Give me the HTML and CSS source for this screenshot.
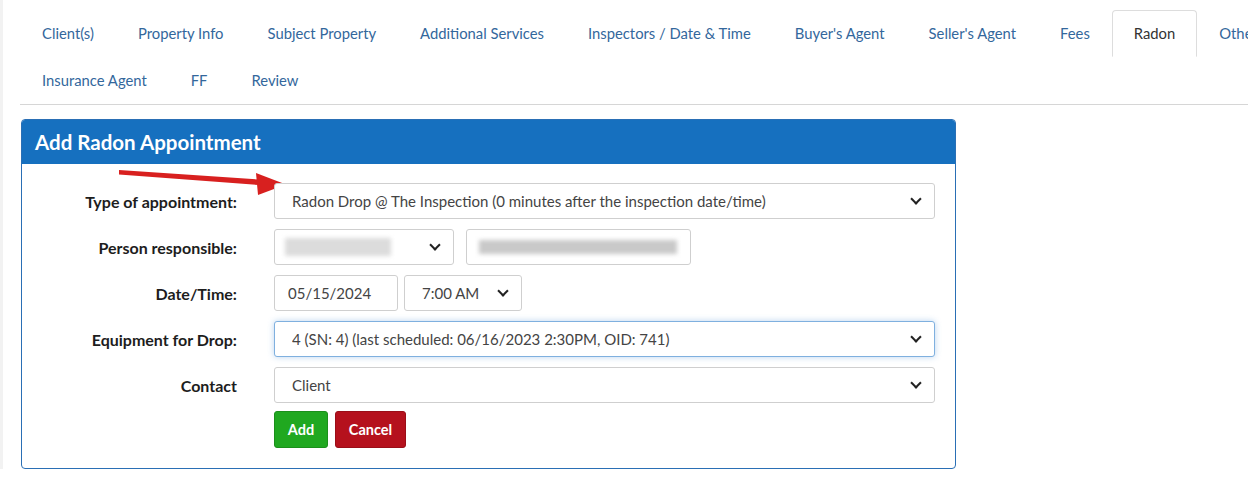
FILE: index.html
```html
<!DOCTYPE html>
<html lang="en">
<head>
    <meta charset="UTF-8">
    <meta name="viewport" content="width=device-width, initial-scale=1.0">
    <title>Add Radon Appointment</title>
    <link rel="stylesheet" href="styles.css">
</head>
<body>
    <div class="page">
        <ul class="tabs">
            <li><a href="#">Client(s)</a></li>
            <li><a href="#">Property Info</a></li>
            <li><a href="#">Subject Property</a></li>
            <li><a href="#">Additional Services</a></li>
            <li><a href="#">Inspectors / Date &amp; Time</a></li>
            <li><a href="#">Buyer's Agent</a></li>
            <li><a href="#">Seller's Agent</a></li>
            <li><a href="#">Fees</a></li>
            <li class="active"><a href="#">Radon</a></li>
            <li><a href="#">Other</a></li>
            <li><a href="#">Insurance Agent</a></li>
            <li><a href="#">FF</a></li>
            <li><a href="#">Review</a></li>
        </ul>

        <div class="panel">
            <div class="panel-heading">Add Radon Appointment</div>
            <div class="panel-body">
                <svg class="arrow" width="170" height="32" viewBox="0 0 170 32">
                    <path d="M1 4 L141 13.5 L141 19 L1 8.5 Z" fill="#d8201f"/>
                    <polygon points="138,7 140,29 168,18.5" fill="#d8201f"/>
                </svg>

                <div class="form-row">
                    <label>Type of appointment:</label>
                    <div class="controls">
                        <div class="select-wrap full">
                            <select><option>Radon Drop @ The Inspection (0 minutes after the inspection date/time)</option></select>
                        </div>
                    </div>
                </div>

                <div class="form-row">
                    <label>Person responsible:</label>
                    <div class="controls gap-lg">
                        <div class="select-wrap w-person">
                            <div class="fake-select"><span class="blur blur-name"></span></div>
                        </div>
                        <div class="fake-input w-email"><span class="blur blur-email"></span></div>
                    </div>
                </div>

                <div class="form-row">
                    <label>Date/Time:</label>
                    <div class="controls">
                        <input class="input w-date" type="text" value="05/15/2024">
                        <div class="select-wrap w-time">
                            <select><option>7:00 AM</option></select>
                        </div>
                    </div>
                </div>

                <div class="form-row">
                    <label>Equipment for Drop:</label>
                    <div class="controls">
                        <div class="select-wrap full focus">
                            <select><option>4 (SN: 4) (last scheduled: 06/16/2023 2:30PM, OID: 741)</option></select>
                        </div>
                    </div>
                </div>

                <div class="form-row">
                    <label>Contact</label>
                    <div class="controls">
                        <div class="select-wrap full">
                            <select><option>Client</option></select>
                        </div>
                    </div>
                </div>

                <div class="form-row buttons">
                    <span></span>
                    <div class="controls">
                        <button class="btn btn-add">Add</button>
                        <button class="btn btn-cancel">Cancel</button>
                    </div>
                </div>
            </div>
        </div>
    </div>
</body>
</html>
```

FILE: styles.css
```css
* {
    box-sizing: border-box;
    margin: 0;
    padding: 0;
}
body {
    font-family: Lato, "Open Sans", sans-serif;
    background-color: #fff;
    overflow: hidden;
    border-left: 3px solid #f2f2f2;
}
.page {
    padding-top: 10px;
    padding-left: 17px;
}

/* tabs */
.tabs {
    list-style: none;
    display: flex;
    flex-wrap: wrap;
    width: 1320px;
    border-bottom: 1px solid #d6d6d6;
}
.tabs li a {
    display: block;
    padding: 13px 21px;
    line-height: 19px;
    font-size: 14.8px;
    color: #33679c;
    text-decoration: none;
    border: 1px solid transparent;
    border-radius: 4px 4px 0 0;
}
.tabs li.active a {
    color: #333;
    border-color: #ddd;
    border-bottom-color: transparent;
    background-color: #fff;
}

/* panel */
.panel {
    position: relative;
    width: 935px;
    margin-top: 14px;
    margin-left: 1px;
    border: 1px solid #2a6fb5;
    border-radius: 4px;
}
.panel-heading {
    height: 44px;
    padding: 0 13px;
    line-height: 44px;
    background-color: #1670bf;
    color: #fff;
    font-size: 20.5px;
    font-weight: bold;
    border-radius: 3px 3px 0 0;
}
.panel-body {
    padding: 19px 19px 20px 0;
    display: flex;
    flex-direction: column;
    gap: 10px;
}
.arrow {
    position: absolute;
    left: 96px;
    top: 46px;
}

.form-row {
    display: grid;
    grid-template-columns: 215px 661px;
    column-gap: 37px;
    align-items: center;
}
.form-row > label {
    text-align: right;
    font-size: 16px;
    font-weight: bold;
    color: #1d1d1d;
}
.form-row.buttons {
    margin-top: -2px;
}
.controls {
    display: flex;
    align-items: center;
    gap: 6px;
}
.controls.gap-lg {
    gap: 12px;
}

/* inputs */
select,
.fake-select,
.input,
.fake-input {
    display: block;
    width: 100%;
    height: 36px;
    border: 1px solid #cfcfcf;
    border-radius: 3px;
    background-color: #fff;
    font-family: Lato, "Open Sans", sans-serif;
    font-size: 15px;
    color: #444;
}
select {
    appearance: none;
    -webkit-appearance: none;
    padding-left: 17px;
    outline: none;
}
.input {
    padding-left: 13px;
    outline: none;
}
.fake-input {
    padding: 10px 12px;
}
.fake-select {
    padding: 8px 10px;
}
.focus select {
    border-color: #7fb0df;
    box-shadow: 0 0 6px rgba(102, 160, 220, 0.45);
}

.select-wrap {
    position: relative;
    flex: none;
}
.select-wrap::after {
    content: "";
    position: absolute;
    right: 15px;
    top: 12px;
    width: 6px;
    height: 6px;
    border-right: 2px solid #222;
    border-bottom: 2px solid #222;
    transform: rotate(45deg);
    pointer-events: none;
}
.select-wrap.full { width: 661px; }
.select-wrap.w-person { width: 180px; }
.select-wrap.w-time { width: 118px; }
.input.w-date { width: 124px; flex: none; }
.fake-input.w-email { width: 225px; flex: none; }

.blur {
    display: block;
    height: 18px;
    background-color: #d5d5d5;
    filter: blur(2px);
}
.blur-name {
    width: 106px;
    background-color: #dcdcdc;
}
.blur-email {
    width: 198px;
    height: 14px;
    background-color: #c9c9c9;
}

/* buttons */
.btn {
    height: 37px;
    border-radius: 3px;
    color: #fff;
    font-family: Lato, "Open Sans", sans-serif;
    font-size: 14.5px;
    font-weight: bold;
    cursor: pointer;
}
.btn-add {
    width: 54px;
    background-color: #20a820;
    border: 1px solid #1b8f1b;
}
.btn-cancel {
    width: 71px;
    margin-left: 1px;
    background-color: #b5111d;
    border: 1px solid #9a0e18;
}
```
